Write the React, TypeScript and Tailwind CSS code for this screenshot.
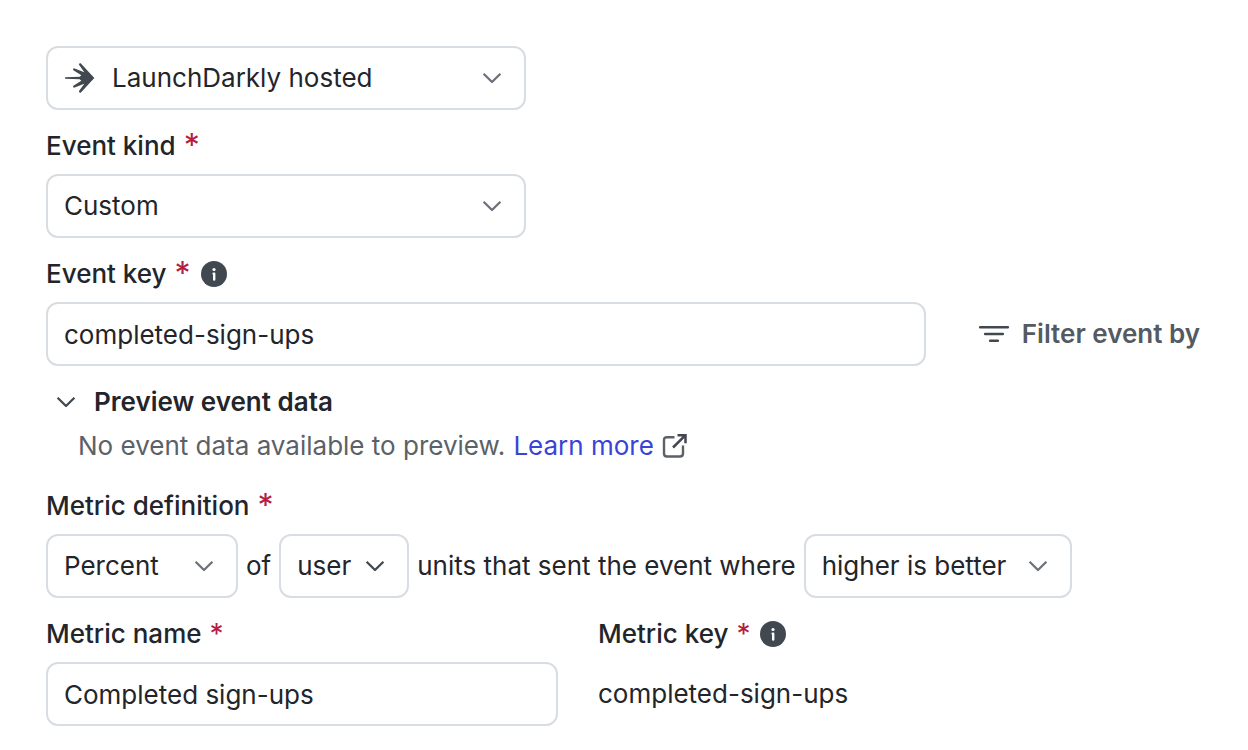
import { ReactNode, useState } from "react";

interface SelectProps {
  id: string;
  label?: string;
  options: string[];
  width: string;
  icon?: ReactNode;
  chevron?: string;
}

const Chevron = ({ className }: { className: string }) => (
  <svg viewBox="0 0 20 20" fill="none" className={`w-5 h-5 ${className}`}>
    <path
      d="M1.6 5.8 10 14l8.4-8.2"
      stroke="currentColor"
      strokeWidth="2.3"
      strokeLinejoin="round"
    />
  </svg>
);

const Logo = () => (
  <svg viewBox="74 66 96 96" className="w-8 h-8" fill="#414850">
    <path d="M165 114 124 70Q119 69 119 74L135 97 104 85Q99 87 102 91L126 106 121 110 78 111.5Q75 114 78 116.5L121 118 126 122 102 137Q99 141 104 143L135 131 119 153Q118 159 124 158Z" />
  </svg>
);

const InfoIcon = () => (
  <svg viewBox="0 0 26 26" className="w-[26px] h-[26px]">
    <circle cx="13" cy="13" r="13" fill="#414850" />
    <circle cx="13" cy="8.5" r="1.6" fill="#fff" />
    <path
      d="M12.6 12.6H13.2V18.6"
      fill="none"
      stroke="#fff"
      strokeWidth="2.4"
      strokeLinecap="round"
      strokeLinejoin="round"
    />
  </svg>
);

const FilterIcon = () => (
  <svg viewBox="0 0 32 32" className="w-8 h-8">
    <path
      d="M2.2 9.3H29.8M7.2 16H24.8M12.2 22.7H19.8"
      stroke="#414850"
      strokeWidth="2.6"
      strokeLinecap="round"
    />
  </svg>
);

const ExternalIcon = () => (
  <svg viewBox="0 0 26 26" fill="none" className="w-[26px] h-[26px]">
    <path
      d="M12.5 4.2H5Q2 4.2 2 7.2V20.5Q2 23.5 5 23.5H18Q21 23.5 21 20.5V12.5"
      stroke="#5b6168"
      strokeWidth="2.4"
    />
    <path
      d="M15.5 2.2H23.5V10.2M23.5 2.2 11 14.5"
      stroke="#414850"
      strokeWidth="2.5"
    />
  </svg>
);

const Select = ({
  id,
  label,
  options,
  width,
  icon,
  chevron = "text-[#6c727a]",
}: SelectProps) => (
  <div className={`relative max-w-full ${width}`}>
    {icon && (
      <span className="absolute left-[18px] top-4 pointer-events-none">
        {icon}
      </span>
    )}
    <select
      id={id}
      aria-label={label}
      className={`appearance-none w-full h-16 border-2 border-[#d8dde3] rounded-xl bg-white ${
        icon ? "pl-16" : "pl-4"
      }`}
    >
      {options.map((option) => (
        <option key={option}>{option}</option>
      ))}
    </select>
    <Chevron
      className={`absolute right-6 top-[22px] pointer-events-none ${chevron}`}
    />
  </div>
);

const Label = ({
  htmlFor,
  children,
  info,
  small,
}: {
  htmlFor: string;
  children: string;
  info?: boolean;
  small?: boolean;
}) => (
  <div className="flex items-center h-10 mb-2 gap-2.5">
    <label htmlFor={htmlFor} className="flex items-center gap-2 font-medium">
      {children}
      <span
        className={`font-normal text-[#b3203f] ${
          small ? "text-[28px]" : "text-[32px]"
        }`}
      >
        *
      </span>
    </label>
    {info && (
      <button type="button" aria-label={`About ${children.toLowerCase()}`}>
        <InfoIcon />
      </button>
    )}
  </div>
);

const App = () => {
  const [eventKey, setEventKey] = useState("completed-sign-ups");
  const [name, setName] = useState("Completed sign-ups");
  const [open, setOpen] = useState(true);

  return (
    <form className="bg-white text-[#23252a] font-['Inter',sans-serif] text-[26px] leading-10 pl-[46px] pr-12 pt-[46px] pb-6">
      <Select
        id="source"
        label="Event source"
        options={["LaunchDarkly hosted"]}
        width="w-120"
        icon={<Logo />}
      />

      <div className="mt-4">
        <Label htmlFor="kind">Event kind</Label>
        <Select id="kind" options={["Custom"]} width="w-120" />
      </div>

      <div className="mt-4">
        <Label htmlFor="event-key" info>
          Event key
        </Label>
        <div className="flex items-center gap-13">
          <input
            id="event-key"
            value={eventKey}
            onChange={(e) => setEventKey(e.target.value)}
            className="flex-1 min-w-0 h-16 px-4 border-2 border-[#d8dde3] rounded-xl"
          />
          <button
            type="button"
            className="flex items-center gap-3 font-semibold text-[#545a62]"
          >
            <FilterIcon />
            Filter event by
          </button>
        </div>
      </div>

      <div className="mt-4">
        <button
          type="button"
          aria-expanded={open}
          onClick={() => setOpen(!open)}
          className="flex items-center gap-[18px] pl-2.5 font-semibold"
        >
          <Chevron className="text-[#414850]" />
          Preview event data
        </button>
        {open && (
          <p className="flex items-center mt-1 pl-8 gap-2 text-[#5b6168]">
            No event data available to preview.
            <a href="#" className="flex items-center gap-2 text-[#3b43d6]">
              Learn more
              <ExternalIcon />
            </a>
          </p>
        )}
      </div>

      <div className="mt-5">
        <Label htmlFor="measure">Metric definition</Label>
        <div className="flex flex-wrap items-center gap-2">
          <Select id="measure" options={["Percent"]} width="w-48" />
          <span>of</span>
          <Select
            id="unit"
            label="Randomization unit"
            options={["user"]}
            width="w-[130px]"
            chevron="text-[#414850]"
          />
          <span>units that sent the event where</span>
          <Select
            id="direction"
            label="Success criteria"
            options={["higher is better"]}
            width="w-67"
          />
        </div>
      </div>

      <div className="flex mt-4 gap-10">
        <div className="w-128 min-w-0">
          <Label htmlFor="name" small>
            Metric name
          </Label>
          <input
            id="name"
            value={name}
            onChange={(e) => setName(e.target.value)}
            className="w-full h-16 px-4 border-2 border-[#d8dde3] rounded-xl"
          />
        </div>
        <div>
          <Label htmlFor="metric-key" info small>
            Metric key
          </Label>
          <output id="metric-key" className="flex items-center h-16">
            completed-sign-ups
          </output>
        </div>
      </div>
    </form>
  );
};

export default App;
